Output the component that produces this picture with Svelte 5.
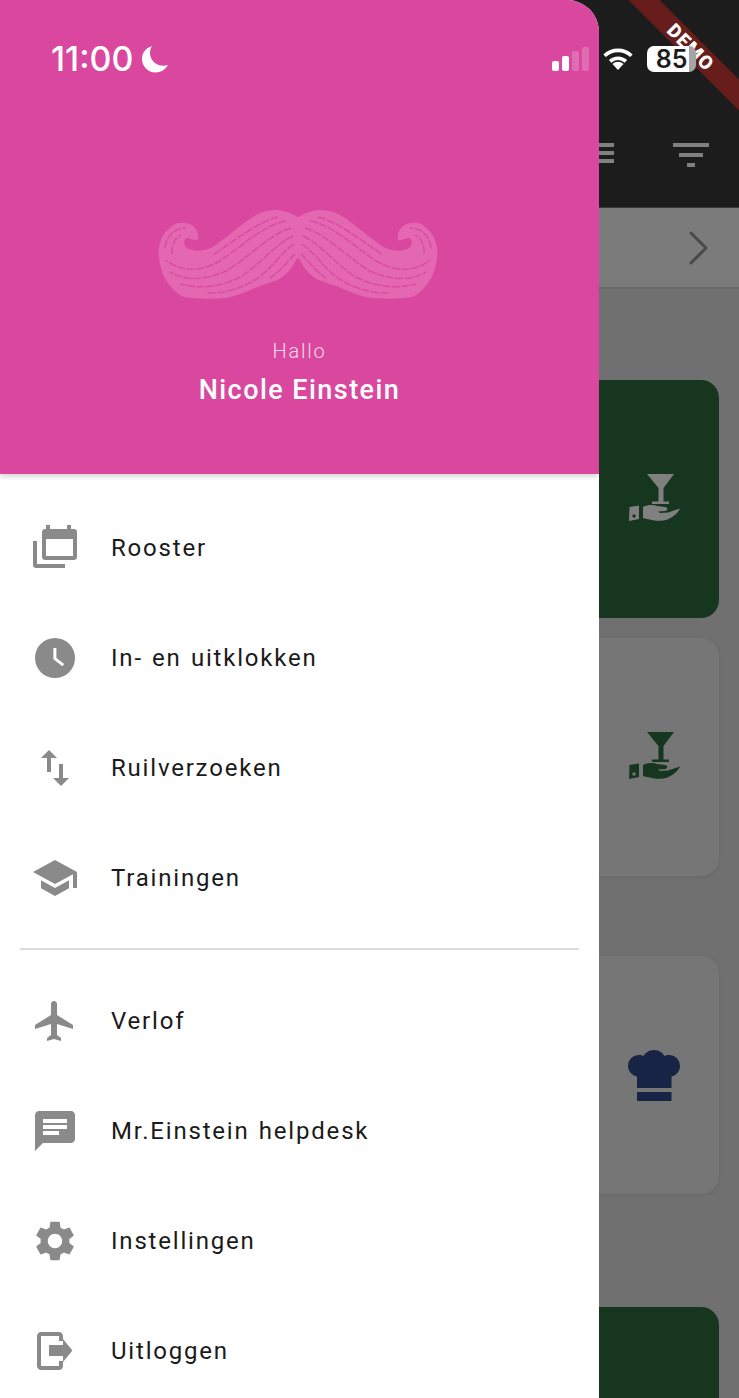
<script lang="ts">
  const groups = [
    [
      { label: 'Rooster', icon: 'calendar' },
      { label: 'In- en uitklokken', icon: 'clock' },
      { label: 'Ruilverzoeken', icon: 'swap' },
      { label: 'Trainingen', icon: 'school' }
    ],
    [
      { label: 'Verlof', icon: 'flight' },
      { label: 'Mr.Einstein helpdesk', icon: 'chat' },
      { label: 'Instellingen', icon: 'settings' },
      { label: 'Uitloggen', icon: 'logout' }
    ]
  ];

  const iconPaths: Record<string, string> = {
    clock: 'M12 2a10 10 0 1 0 0 20 10 10 0 0 0 0-20zM11.200 7h1.500v5l3.900 3-.9 1.100-4.500-3.500z',
    swap: 'M16 17.01V10h-2v7.01h-3L15 21l4-3.99h-3zM9 3L5 6.99h3V14h2V6.99h3L9 3z',
    school: 'M5 13.18v4L12 21l7-3.82v-4L12 17l-7-3.82zM12 3L1 9l11 6 9-4.91V17h2V9L12 3z',
    flight: 'M21 16v-2l-8-5V3.5c0-.83-.67-1.5-1.5-1.5S10 2.67 10 3.5V9l-8 5v2l8-2.5V19l-2 1.5V22l3.5-1 3.5 1v-1.5L13 19v-5.5l8 2.5z',
    chat: 'M20 2H4c-1.1 0-1.99.9-1.99 2L2 22l4-4h14c1.1 0 2-.9 2-2V4c0-1.1-.9-2-2-2zM6 9h12v2H6V9zm8 5H6v-2h8v2zm4-6H6V6h12v2z',
    settings: 'M19.14 12.94c.04-.3.06-.61.06-.94 0-.32-.02-.64-.07-.94l2.03-1.58c.18-.14.23-.41.12-.61l-1.92-3.32c-.12-.22-.37-.29-.59-.22l-2.39.96c-.5-.38-1.03-.7-1.62-.94l-.36-2.54c-.04-.24-.24-.41-.48-.41h-3.84c-.24 0-.43.17-.47.41l-.36 2.54c-.59.24-1.13.57-1.62.94l-2.39-.96c-.22-.08-.47 0-.59.22L2.74 8.87c-.12.21-.08.47.12.61l2.03 1.58c-.05.3-.09.63-.09.94s.02.64.07.94l-2.03 1.58c-.18.14-.23.41-.12.61l1.92 3.32c.12.22.37.29.59.22l2.39-.96c.5.38 1.03.7 1.62.94l.36 2.54c.05.24.24.41.48.41h3.84c.24 0 .44-.17.47-.41l.36-2.54c.59-.24 1.13-.56 1.62-.94l2.39.96c.22.08.47 0 .59-.22l1.92-3.32c.12-.22.07-.47-.12-.61l-2.01-1.58zM12 15.6c-1.98 0-3.6-1.62-3.6-3.6s1.62-3.6 3.6-3.6 3.6 1.62 3.6 3.6-1.62 3.6-3.6 3.6z',
    logout: 'M5 2.500h9c1.100 0 2 .9 2 2V7h-2V4.500H5v15h9V17h2v2.500c0 1.100-.9 2-2 2H5c-1.100 0-2-.9-2-2v-15c0-1.100.9-2 2-2zM9 9h7V6l4.700 5.800L16 17.500V14.500H9z',
    calendar: 'M7.500.5h2v2h8.500v-2h2v2h1.500c1 0 1.500.7 1.500 1.500V16.500c0 1-.7 1.500-1.500 1.500H7c-1 0-1.500-.7-1.500-1.500V4c0-.8.5-1.500 1.500-1.500h.5zM7.500 7.500V16H21V7.500zM1 8.500h2V20H17v2H2.500C1.500 22 1 21.300 1 20.500z'
  };

  // left half of the moustache, mirrored for the right one
  const moustache =
    'M141 8C132 2 124 0 117 0C106 0 100 4 93 8C84 14 76 21 67 28C60 33 56 37 50 39C44 41 38 41 34 40C30 39 27 37 26 33C26 29 28 28 30 28C34 29 38 31 40 30C41 24 39 20 36 17C33 14 30 13 26 13C20 12 16 14 13 17C8 21 4 26 3 30C1 36 0 42 1 47C2 56 4 64 8 70C13 78 19 84 26 87C38 89 54 89 67 88C78 86 88 82 97 78C106 74 116 72 123 68C130 63 134 58 137 52L141 46z';

  const hairs = [
    'M120 7C100 12 80 28 55 45',
    'M128 11C105 15 85 36 60 52C42 62 22 62 8 50',
    'M133 18C112 24 92 46 70 60C50 70 28 72 12 62',
    'M135 26C118 34 102 54 84 66C66 76 44 80 22 74',
    'M136 34C124 42 114 58 100 68C88 76 70 84 48 83',
    'M137 44C130 50 124 60 112 68',
    'M7 38C8 27 16 18 28 18',
    'M14 44C13 36 17 27 23 25'
  ];
</script>

<div class="screen">
  <!-- Page behind the drawer -->
  <div class="page">
    <header class="appbar">
      <div class="appbar-icons">
        <span class="menu-lines"><i></i><i></i><i></i></span>
        <span class="filter-lines"><i></i><i></i><i></i></span>
      </div>
    </header>
    <div class="datebar">
      <svg class="chevron" viewBox="0 0 22 36" width="22" height="36">
        <path d="M3 3l15 15L3 33" fill="none" stroke="#4a4a4a" stroke-width="3" stroke-linecap="round" stroke-linejoin="round" />
      </svg>
    </div>
    <div class="cards">
      <div class="card card-green first">
        {@render serve('#808080', '#17361f')}
      </div>
      <div class="card card-gray second">
        {@render serve('#17361f', '#767676')}
      </div>
      <div class="card card-gray third">
        <svg class="hat" viewBox="0 0 52 52" width="52" height="52">
          <path d="M26 0c5 0 9 3 10.500 6 1-.5 2.500-1 4-1C47 5 52 9.500 52 16c0 5-3.500 9.500-8.500 10.500V38H9V26.500C4 25.500 0 21 0 16 0 9.500 5 5 11.500 5c1.500 0 3 .500 4 1C17 3 21 0 26 0zM9 42h34.500v9H9z" fill="#172445" />
        </svg>
      </div>
      <div class="card card-green fourth"></div>
    </div>
  </div>

  <!-- Drawer -->
  <aside class="drawer">
    <div class="drawer-header">
      <svg class="moustache" viewBox="0 0 280 89" width="280" height="89">
        <path d={moustache} fill="#e467b1" />
        <path d={moustache} fill="#e467b1" transform="matrix(-1 0 0 1 280 0)" />
        <g fill="none" stroke="#d9489e" stroke-width="1.500" stroke-dasharray="8 1.500" opacity="0.85">
          {#each hairs as d}
            <path {d} />
            <path {d} transform="matrix(-1 0 0 1 280 0)" />
          {/each}
        </g>
      </svg>
      <p class="hello">Hallo</p>
      <p class="name">Nicole Einstein</p>
    </div>

    <nav class="menu">
      {#each groups as items, i}
        {#if i > 0}
          <hr class="divider" />
        {/if}
        <ul class="menu-group">
          {#each items as item}
            <li class="menu-item">
              <svg class="menu-icon" viewBox="0 0 24 24" width="48" height="48">
                <path d={iconPaths[item.icon]} fill="#8a8a8a" fill-rule="evenodd" />
              </svg>
              <span>{item.label}</span>
            </li>
          {/each}
        </ul>
      {/each}
    </nav>
  </aside>

  <div class="banner"><span>DEMO</span></div>

  <!-- Status bar -->
  <div class="statusbar">
    <div class="clock">
      <span>11:00</span>
      <svg viewBox="0 0 26 28" width="26" height="28">
        <path d="M10 1C3.500 3 0 8 0 14c0 7.500 6 13.500 13.500 13.500 5.500 0 10-3 12.500-7.500-1.500.5-3 .7-4.500.7C13.500 20.700 8 15 8 7.500 8 5.500 8.800 3 10 1z" fill="#fff" />
      </svg>
    </div>
    <div class="status-right">
      <span class="signal"><i class="on"></i><i class="on"></i><i></i><i></i></span>
      <svg viewBox="0 0 34 26" width="32" height="24" class="wifi">
        <path d="M2.500 9.500A21 21 0 0 1 31.500 9.500M8.500 15.500A12.500 12.500 0 0 1 25.500 15.500" fill="none" stroke="#fff" stroke-width="4" />
        <path d="M17 25L11 18.500A8.500 8.500 0 0 1 23 18.500z" fill="#fff" />
      </svg>
      <span class="battery">85</span>
    </div>
  </div>
</div>

{#snippet serve(color: string, cut: string)}
  <svg class="serve" viewBox="0 0 52 47" width="52" height="47">
    <path d="M19 0H46L35.500 14V27.500H41V30H24V27.500H30.500V14z" fill={color} />
    <path d="M1.500 33L11 31.500V45L1 47z" fill={color} />
    <circle cx="6" cy="42" r="1.700" fill={cut} />
    <path d="M15 33C20 30.500 25 30.500 29 32L37 33C40 33.500 40 36.500 37 37L30 37.500L32 39L40 38.500L52 34.500C50 39 45 43.500 38 46C33 47.500 27 47 15 44z" fill={color} />
  </svg>
{/snippet}

<style>
  :global(body) {
    margin: 0;
    background: #707070;
  }

  .screen {
    position: relative;
    width: 739px;
    height: 1398px;
    overflow: hidden;
    font-family: Roboto, sans-serif;
  }

  .page {
    display: flex;
    flex-direction: column;
    height: 100%;
    background: #707070;
  }

  .appbar {
    flex-shrink: 0;
    height: 208px;
    box-sizing: border-box;
    background: #1c1c1c;
    border-bottom: 1px solid #3c3c3c;
  }

  .appbar-icons {
    display: flex;
    justify-content: flex-end;
    gap: 59px;
    padding: 143px 30px 0 0;
  }

  .menu-lines,
  .filter-lines {
    display: flex;
    flex-direction: column;
    gap: 4px;
    align-items: center;
  }

  .menu-lines i,
  .filter-lines i {
    display: block;
    height: 4px;
    background: #808080;
  }

  .menu-lines {
    width: 16px;
  }

  .menu-lines i {
    width: 16px;
  }

  .filter-lines {
    width: 36px;
    gap: 6px;
  }

  .filter-lines i:nth-child(1) {
    width: 36px;
  }

  .filter-lines i:nth-child(2) {
    width: 24px;
  }

  .filter-lines i:nth-child(3) {
    width: 8px;
  }

  .datebar {
    flex-shrink: 0;
    height: 81px;
    box-sizing: border-box;
    display: flex;
    align-items: center;
    justify-content: flex-end;
    padding-right: 29px;
    background: #7b7b7b;
    border-bottom: 2px solid #686868;
  }

  .cards {
    display: flex;
    flex-direction: column;
    align-items: flex-end;
    padding: 91px 20px 0 0;
  }

  .card {
    width: 200px;
    border-radius: 18px;
    display: flex;
    justify-content: flex-end;
    flex-shrink: 0;
  }

  .card svg {
    margin: 94px 39px 0 0;
  }

  .card-green {
    background: #17361f;
  }

  .card-gray {
    background: #767676;
    box-shadow: 0 1px 4px rgba(0, 0, 0, 0.08);
  }

  .first {
    height: 238px;
  }

  .second {
    height: 238px;
    margin-top: 20px;
  }

  .third {
    height: 238px;
    margin-top: 80px;
  }

  .fourth {
    height: 200px;
    margin-top: 113px;
  }

  .drawer {
    position: absolute;
    top: 0;
    left: 0;
    bottom: 0;
    width: 599px;
    background: #fff;
    border-top-right-radius: 32px;
    overflow: hidden;
  }

  .drawer-header {
    height: 474px;
    box-sizing: border-box;
    padding-top: 210px;
    background: #d9489e;
    box-shadow: 0 2px 6px rgba(0, 0, 0, 0.2);
    position: relative;
    display: flex;
    flex-direction: column;
    align-items: center;
    color: #fff;
  }

  .moustache {
    display: block;
    flex-shrink: 0;
    margin-left: -4px;
  }

  .hello {
    margin: 39px 0 0;
    font-size: 20px;
    font-weight: 300;
    line-height: 26px;
    letter-spacing: 1.800px;
    color: #f6d9ea;
  }

  .name {
    margin: 8px 0 0;
    font-size: 27px;
    font-weight: 500;
    line-height: 36px;
    letter-spacing: 1.450px;
  }

  .menu {
    padding: 19px 0 0;
  }

  .menu-group {
    margin: 0;
    padding: 0;
    list-style: none;
  }

  .menu-item {
    height: 110px;
    display: flex;
    align-items: center;
    gap: 32px;
    padding-left: 31px;
    font-size: 24px;
    letter-spacing: 1.800px;
    word-spacing: 1.500px;
    color: #1a1a1a;
  }

  .divider {
    height: 2px;
    margin: 15px 20px 16px;
    border: 0;
    background: #dcdcdc;
  }

  .statusbar {
    position: absolute;
    top: 0;
    left: 0;
    right: 0;
    height: 118px;
    color: #fff;
  }

  .clock {
    position: absolute;
    left: 51px;
    top: 39px;
    display: flex;
    align-items: center;
    gap: 9px;
    font-family: Inter, sans-serif;
    font-size: 34px;
    font-weight: 500;
    line-height: 40px;
  }

  .status-right {
    position: absolute;
    left: 552px;
    top: 46px;
    display: flex;
    align-items: center;
    gap: 13px;
  }

  .signal {
    display: flex;
    align-items: flex-end;
    gap: 3px;
    height: 24px;
  }

  .signal i {
    width: 7px;
    border-radius: 2px;
    background: rgba(255, 255, 255, 0.2);
  }

  .signal i.on {
    background: #fff;
  }

  .signal i:nth-child(1) {
    height: 10px;
  }

  .signal i:nth-child(2) {
    height: 15px;
  }

  .signal i:nth-child(3) {
    height: 20px;
  }

  .signal i:nth-child(4) {
    height: 24px;
  }

  .battery {
    width: 49px;
    height: 26px;
    border-radius: 7px;
    background: linear-gradient(90deg, #fff 85%, #a5a5a5 85%);
    color: #1c1c1c;
    font-family: Inter, sans-serif;
    font-size: 25px;
    font-weight: 600;
    line-height: 26px;
    text-align: center;
  }

  .banner {
    position: absolute;
    top: 36px;
    left: 611px;
    width: 160px;
    height: 22px;
    transform: rotate(45deg);
    background: rgba(150, 30, 28, 0.62);
    display: flex;
    align-items: center;
    justify-content: center;
    color: #fff;
    font-family: Roboto, sans-serif;
    font-size: 19px;
    font-weight: 900;
    letter-spacing: 1.200px;
  }
</style>
